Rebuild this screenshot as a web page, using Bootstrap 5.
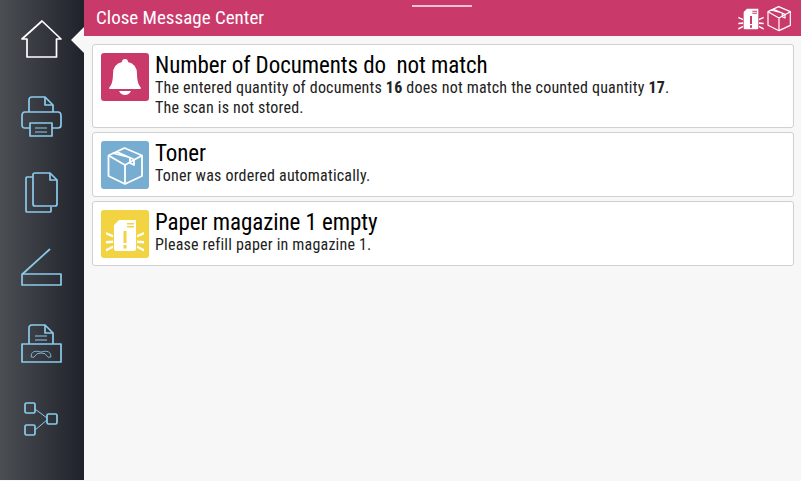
<!DOCTYPE html>
<html lang="en">
<head>
    <meta charset="UTF-8">
    <title>Message Center</title>
    <link href="https://cdn.jsdelivr.net/npm/bootstrap@5.3.0/dist/css/bootstrap.min.css" rel="stylesheet">
    <style>
        html, body { height: 100%; overflow: hidden; }
        body {
            background-color: #f7f7f7;
            font-family: "Roboto", "Liberation Sans", sans-serif;
            font-stretch: condensed;
        }
        .side-bar {
            width: 84px;
            height: 480px;
            padding-top: 20px;
            background: linear-gradient(to right, #4b4e53, #1f222a);
            color: #8ccbec;
        }
        .side-item { height: 76px; }
        .side-item.active { color: #fff; }
        .side-arrow {
            position: absolute;
            left: 71px;
            top: 27px;
            border-style: solid;
            border-width: 13px 13px 13px 0;
            border-color: transparent #f7f7f7 transparent transparent;
        }
        .top-bar {
            height: 36px;
            padding: 0 6px 0 12px;
            background-color: #c93a6b;
            color: #fff;
        }
        .top-title { font-size: 19px; white-space: nowrap; }
        .top-handle {
            position: absolute;
            left: 328px;
            top: 5px;
            width: 60px;
            height: 2px;
            background-color: #f3c4d5;
        }
        .top-icons { gap: 0; margin-right: 0; }
        .top-icons svg + svg { margin-left: -4px; }
        .msg-list { padding: 8px 7px 0 8px; gap: 4px; }
        .msg-card { border-color: #d0d0d0; border-radius: 3px; padding: 8px 8px 7px; gap: 6px; }
        .msg-tile {
            width: 48px;
            height: 48px;
            flex: none;
            border-radius: 3px;
        }
        .tile-red { background-color: #c93a6b; }
        .tile-blue { background-color: #78add2; }
        .tile-yellow { background-color: #f2d341; }
        .msg-title { display: block; font-size: 23px; line-height: 25px; letter-spacing: -.06px; padding-bottom: 2px; color: #000; white-space: nowrap; }
        .msg-text { display: block; font-size: 16px; line-height: 20px; letter-spacing: .2px; color: #222; white-space: nowrap; margin-top: -2px; padding-bottom: 2px; }
    </style>
</head>
<body>

<div class="d-flex position-relative">
    <div class="side-bar flex-shrink-0">
        <div class="side-item active d-flex justify-content-center">
            <svg width="42" height="42" viewBox="0 0 42 42" fill="none" stroke="currentColor" stroke-width="1.7" stroke-linejoin="round"><path d="M21 1 L40 19 H35.500 V37 H6 V19 H1 Z"/></svg>
        </div>
        <div class="side-item d-flex justify-content-center">
            <svg width="42" height="42" viewBox="0 0 42 42" fill="none" stroke="currentColor" stroke-width="1.7" stroke-linejoin="round"><path d="M8 16 V4 Q8 1 11 1 H24 L32 9 V16"/><path d="M24 1 V9 H32"/><path d="M9 32 H4 Q1 32 1 29 V20 Q1 16 4 16 H37 Q40 16 40 20 V29 Q40 32 37 32 H31"/><path d="M9 27 H31 V40 H9 Z"/><path d="M14 32 H26 M14 36 H26" stroke-width="1"/></svg>
        </div>
        <div class="side-item d-flex justify-content-center">
            <svg width="42" height="42" viewBox="0 0 42 42" fill="none" stroke="currentColor" stroke-width="1.7" stroke-linejoin="round"><path d="M12 5 H6 Q5 5 5 6 V39 Q5 40 6 40 H29 Q30 40 30 39 V35"/><path d="M14 1 H29 L36 8 V32 Q36 34 34 34 H14 Q12 34 12 32 V3 Q12 1 14 1 Z"/><path d="M29 1 V8 H36"/></svg>
        </div>
        <div class="side-item d-flex justify-content-center">
            <svg width="42" height="42" viewBox="0 0 42 42" fill="none" stroke="currentColor" stroke-width="1.7" stroke-linejoin="round"><path d="M1.500 26 L29 1"/><path d="M1 26 H40 V37 H1 Z"/></svg>
        </div>
        <div class="side-item d-flex justify-content-center">
            <svg width="42" height="42" viewBox="0 0 42 42" fill="none" stroke="currentColor" stroke-width="1.7" stroke-linejoin="round"><path d="M8 20 V4 Q8 1 11 1 H24 L32 9 V20"/><path d="M24 1 V9 H32"/><path d="M14 12 H26 M14 16 H26" stroke-width="1"/><path d="M1 20 H40 V38 H1 Z"/><path d="M10 33 Q10 25 20 28 Q30 25 30 33 Q26 34 26 32 Q25 29 20 29 Q15 29 14 32 Q14 34 10 33 Z" stroke-width="1" opacity=".8"/></svg>
        </div>
        <div class="side-item d-flex justify-content-center">
            <svg width="42" height="42" viewBox="0 0 42 42" fill="none" stroke="currentColor" stroke-width="1.7" stroke-linejoin="round"><rect x="4" y="3" width="10" height="10" rx="1.500"/><rect x="4" y="25" width="10" height="10" rx="1.500"/><rect x="26" y="14" width="10" height="10" rx="1.500"/><path d="M14 9 L26 18 M14 30 L26 20" stroke-width="1"/></svg>
        </div>
    </div>
    <div class="side-arrow"></div>

    <div class="flex-grow-1 position-relative">
        <div class="top-bar d-flex align-items-center justify-content-between">
            <span class="top-title">Close Message Center</span>
            <span class="top-handle"></span>
            <div class="top-icons d-flex align-items-center">
                <svg width="32" height="32" viewBox="0 0 48 48" fill="#fff"><use href="#paper-icon"/></svg>
                <svg width="32" height="32" viewBox="0 0 48 48" fill="none" stroke="#fff"><use href="#box-icon"/></svg>
            </div>
        </div>
        <div class="msg-list d-flex flex-column">
            <div class="card msg-card flex-row">
                <div class="msg-tile tile-red">
                    <svg width="48" height="48" viewBox="0 0 48 48" fill="#fff" class="d-block"><path d="M24 6 Q27 6 27 9 Q36 11 36 21 Q36 28 38 32 L40 35 Q40 36 39 36 H9 Q8 36 8 35 L10 32 Q12 28 12 21 Q12 11 21 9 Q21 6 24 6 Z"/><path d="M18 38 H30 Q28 42 24 42 Q20 42 18 38 Z"/></svg>
                </div>
                <div>
                    <span class="msg-title">Number of Documents do&nbsp; not match</span>
                    <span class="msg-text">The entered quantity of documents <b>16</b> does not match the counted quantity <b>17</b>.</span>
                    <span class="msg-text">The scan is not stored.</span>
                </div>
            </div>
            <div class="card msg-card flex-row">
                <div class="msg-tile tile-blue">
                    <svg width="48" height="48" viewBox="0 0 48 48" fill="none" stroke="#fff" class="d-block"><use href="#box-icon"/></svg>
                </div>
                <div>
                    <span class="msg-title">Toner</span>
                    <span class="msg-text">Toner was ordered automatically.</span>
                </div>
            </div>
            <div class="card msg-card flex-row">
                <div class="msg-tile tile-yellow">
                    <svg width="48" height="48" viewBox="0 0 48 48" fill="#fff" class="d-block"><use href="#paper-icon"/></svg>
                </div>
                <div>
                    <span class="msg-title">Paper magazine 1 empty</span>
                    <span class="msg-text">Please refill paper in magazine 1.</span>
                </div>
            </div>
        </div>
    </div>
</div>

<svg width="0" height="0" class="position-absolute">
    <defs>
        <g id="box-icon" stroke-width="1.800" stroke-linejoin="round">
            <path d="M23.500 7 L41 14.500 V35 L24 43 L7.500 35 V14.500 Z"/>
            <path d="M7.500 14.500 L24 24 L41 14.500 M24 24 V43"/>
            <path d="M15 10.500 L33 18.500 V24 L29 22 V16.500 L11.500 12"/>
        </g>
        <g id="paper-icon">
            <path fill-rule="evenodd" d="M13 15 L18 10 H35 V39 Q35 41 33 41 H15 Q13 41 13 39 Z M26 13 V14.500 H33 V13 Z M26 16 V17.500 H33 V16 Z M22.500 21 V33 H25.500 V21 Z M22.500 35 V38.500 H25.500 V35 Z"/>
            <path d="M5 22 L12 25 V27.500 L5 24.500 Z M5 31 L12 30.500 V33 L5 33.500 Z M5 39 L12 35.500 V38 L5 41.500 Z M43 22 L36 25 V27.500 L43 24.500 Z M43 31 L36 30.500 V33 L43 33.500 Z M43 39 L36 35.500 V38 L43 41.500 Z"/>
        </g>
    </defs>
</svg>

<script src="https://cdn.jsdelivr.net/npm/bootstrap@5.3.0/dist/js/bootstrap.bundle.min.js"></script>
</body>
</html>
